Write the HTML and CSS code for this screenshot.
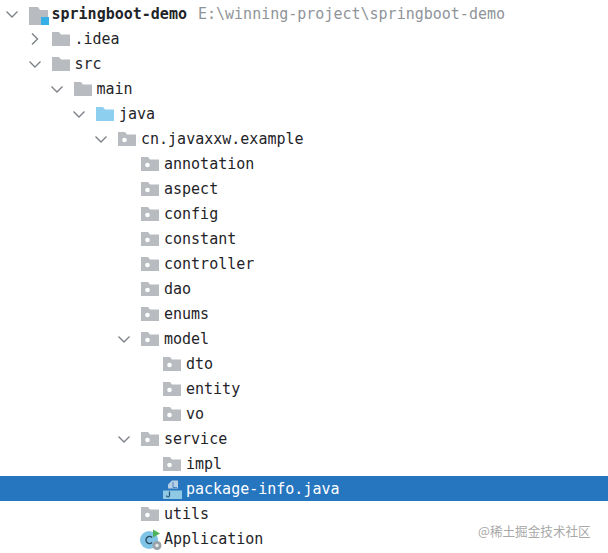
FILE: index.html
```html
<!DOCTYPE html>
<html lang="en">
  <head>
    <meta charset="UTF-8" />
    <title>springboot-demo</title>
    <link rel="stylesheet" href="styles.css">
  </head>
  <body>
    <svg class="defs" width="0" height="0">
      <symbol id="chev-down" viewBox="0 0 16 16"><path d="M2.5 5.5 8 11l5.5-5.5" fill="none" stroke="#7d8288" stroke-width="1.4"/></symbol>
      <symbol id="chev-right" viewBox="0 0 16 16"><path d="M5 2.5 10.5 8 5 13.5" fill="none" stroke="#7d8288" stroke-width="1.4"/></symbol>
      <symbol id="folder" viewBox="0 0 18 18"><path d="M0 2h7l2 2.500h9V16H0z" fill="#b8bcc0"/></symbol>
      <symbol id="folder-src" viewBox="0 0 18 18"><path d="M0 2h7l2 2.500h9V16H0z" fill="#8ccfee"/></symbol>
      <symbol id="package" viewBox="0 0 18 18"><path d="M0 2h7l2 2.500h9V16H0z" fill="#b8bcc0"/><circle cx="6.500" cy="10" r="2.300" fill="#fff"/></symbol>
      <symbol id="module" viewBox="0 0 20 18"><path d="M0 0h9l2 3h8v8h-6v7H0z" fill="#b8bcc0"/><rect x="12" y="10" width="8" height="8" fill="#35b0e6"/></symbol>
      <symbol id="java-file" viewBox="0 0 19 20"><path d="M9 1.500h6v8H5V5.500z" fill="#b7cfe4"/><path d="M10 3v5.500h4" fill="none" stroke="#2675bf" stroke-width=".8"/><rect x="0" y="11.500" width="19" height="8.500" fill="#8fc9e4"/><path d="M6.500 12.500v4a1.500 1.500 0 0 1-3 0" fill="none" stroke="#24507a" stroke-width="1.200"/></symbol>
      <symbol id="app-class" viewBox="0 0 22 22"><circle cx="9" cy="12" r="9" fill="#7fc4e6"/><path d="M12 9.500a3.500 3.500 0 1 0 0 5" fill="none" stroke="#2b4b63" stroke-width="1.500"/><path d="M13 1.500l7 4-7 4z" fill="#4eb35a"/><circle cx="17" cy="17.500" r="4.500" fill="#9ba3aa"/><circle cx="17" cy="17.500" r="1.800" fill="#e6e8ea"/></symbol>
    </svg>

    <ul class="tree">
      <li class="row level-0">
        <svg class="chev"><use href="#chev-down"/></svg>
        <svg class="icon icon-module"><use href="#module"/></svg>
        <span class="name root">springboot-demo</span>
        <span class="path">E:\winning-project\springboot-demo</span>
      </li>
      <li class="row level-1"><svg class="chev"><use href="#chev-right"/></svg><svg class="icon"><use href="#folder"/></svg><span class="name">.idea</span></li>
      <li class="row level-1"><svg class="chev"><use href="#chev-down"/></svg><svg class="icon"><use href="#folder"/></svg><span class="name">src</span></li>
      <li class="row level-2"><svg class="chev"><use href="#chev-down"/></svg><svg class="icon"><use href="#folder"/></svg><span class="name">main</span></li>
      <li class="row level-3"><svg class="chev"><use href="#chev-down"/></svg><svg class="icon"><use href="#folder-src"/></svg><span class="name">java</span></li>
      <li class="row level-4"><svg class="chev"><use href="#chev-down"/></svg><svg class="icon"><use href="#package"/></svg><span class="name">cn.javaxxw.example</span></li>
      <li class="row level-5"><span class="chev"></span><svg class="icon"><use href="#package"/></svg><span class="name">annotation</span></li>
      <li class="row level-5"><span class="chev"></span><svg class="icon"><use href="#package"/></svg><span class="name">aspect</span></li>
      <li class="row level-5"><span class="chev"></span><svg class="icon"><use href="#package"/></svg><span class="name">config</span></li>
      <li class="row level-5"><span class="chev"></span><svg class="icon"><use href="#package"/></svg><span class="name">constant</span></li>
      <li class="row level-5"><span class="chev"></span><svg class="icon"><use href="#package"/></svg><span class="name">controller</span></li>
      <li class="row level-5"><span class="chev"></span><svg class="icon"><use href="#package"/></svg><span class="name">dao</span></li>
      <li class="row level-5"><span class="chev"></span><svg class="icon"><use href="#package"/></svg><span class="name">enums</span></li>
      <li class="row level-5"><svg class="chev"><use href="#chev-down"/></svg><svg class="icon"><use href="#package"/></svg><span class="name">model</span></li>
      <li class="row level-6"><span class="chev"></span><svg class="icon"><use href="#package"/></svg><span class="name">dto</span></li>
      <li class="row level-6"><span class="chev"></span><svg class="icon"><use href="#package"/></svg><span class="name">entity</span></li>
      <li class="row level-6"><span class="chev"></span><svg class="icon"><use href="#package"/></svg><span class="name">vo</span></li>
      <li class="row level-5"><svg class="chev"><use href="#chev-down"/></svg><svg class="icon"><use href="#package"/></svg><span class="name">service</span></li>
      <li class="row level-6"><span class="chev"></span><svg class="icon"><use href="#package"/></svg><span class="name">impl</span></li>
      <li class="row level-6 selected"><span class="chev"></span><svg class="icon icon-file"><use href="#java-file"/></svg><span class="name">package-info.java</span></li>
      <li class="row level-5"><span class="chev"></span><svg class="icon"><use href="#package"/></svg><span class="name">utils</span></li>
      <li class="row level-5"><span class="chev"></span><svg class="icon icon-app"><use href="#app-class"/></svg><span class="name">Application</span></li>
    </ul>

    <div class="watermark">@稀土掘金技术社区</div>
  </body>
</html>
```

FILE: styles.css
```css
* {
  box-sizing: border-box;
}
body {
  margin: 0;
  height: 553px;
  overflow: hidden;
  background-color: #fff;
  font-family: "DejaVu Sans Mono", "Liberation Mono", monospace;
  font-size: 15px;
  color: #1f2429;
}
.defs {
  display: block;
  height: 0;
}
.tree {
  list-style: none;
  margin: 0;
  padding: 1px 0 0;
}
.row {
  display: flex;
  align-items: center;
  height: 25px;
  white-space: nowrap;
}
.row.selected {
  background-color: #2675bf;
  color: #fff;
}
.level-0 { padding-left: 4px; }
.level-1 { padding-left: 26.5px; }
.level-2 { padding-left: 48.5px; }
.level-3 { padding-left: 71px; }
.level-4 { padding-left: 93px; }
.level-5 { padding-left: 116px; }
.level-6 { padding-left: 138px; }
.chev {
  flex: none;
  width: 16px;
  height: 16px;
  margin-right: 9px;
}
.icon {
  flex: none;
  width: 18px;
  height: 18px;
  margin-right: 5px;
}
.icon-module {
  width: 20px;
  margin-top: 4px;
  margin-right: 2.5px;
}
.icon-file {
  width: 19px;
  height: 20px;
  margin-right: 4px;
}
.icon-app {
  width: 22px;
  height: 22px;
  margin: 0 2px 0 -1px;
}
.root {
  font-weight: bold;
}
.path {
  margin-left: 11px;
  color: #8f9499;
}
.watermark {
  position: absolute;
  left: 478px;
  top: 521px;
  color: #a8a8a8;
  font-family: "Noto Sans CJK SC", sans-serif;
  font-size: 12.6px;
}
```
